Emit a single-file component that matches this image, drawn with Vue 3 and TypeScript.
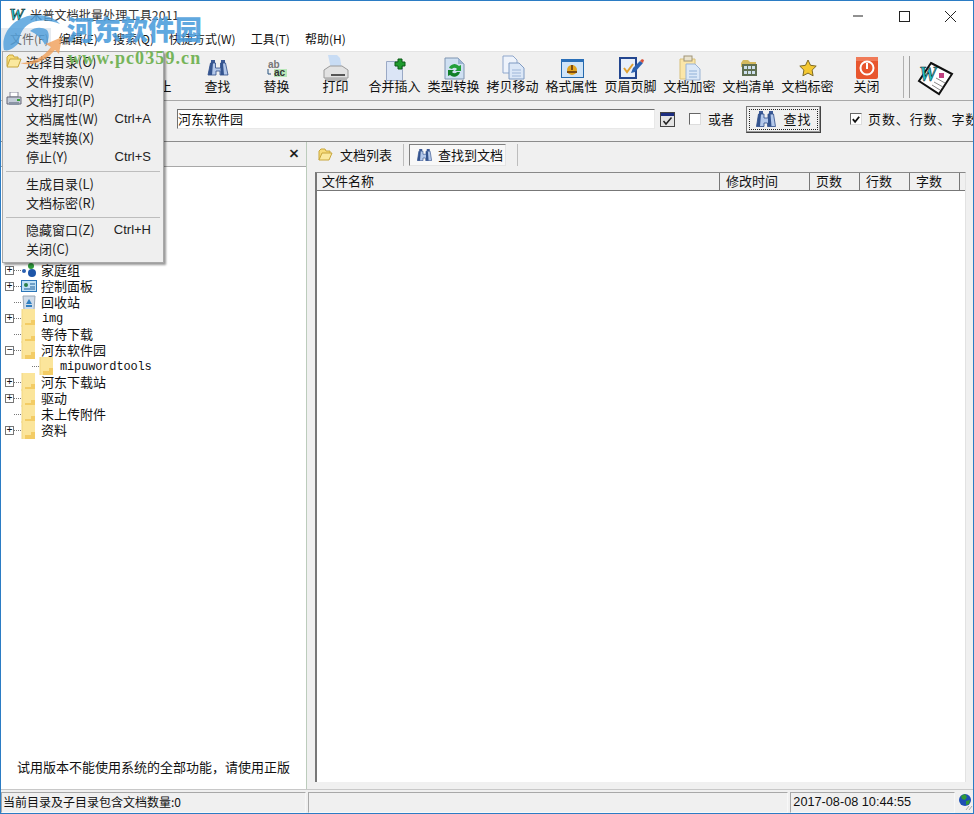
<script setup lang="ts">
type Tool = { label: string; icon: string }
type Row = { label: string; kind: string; exp?: '+' | '-'; depth?: number; mono?: boolean }
type MenuEntry = { label?: string; key?: string; icon?: string; sep?: boolean }

const tools: Tool[] = [
  { label: '选择目录', icon: 'none' },
  { label: '搜索', icon: 'none' },
  { label: '停止', icon: 'stop' },
  { label: '查找', icon: 'find' },
  { label: '替换', icon: 'replace' },
  { label: '打印', icon: 'print' },
  { label: '合并插入', icon: 'merge' },
  { label: '类型转换', icon: 'convert' },
  { label: '拷贝移动', icon: 'copy' },
  { label: '格式属性', icon: 'format' },
  { label: '页眉页脚', icon: 'header' },
  { label: '文档加密', icon: 'lock' },
  { label: '文档清单', icon: 'list' },
  { label: '文档标密', icon: 'star' },
  { label: '关闭', icon: 'close' },
]

const menus = ['文件(F)', '编辑(E)', '搜索(Q)', '快捷方式(W)', '工具(T)', '帮助(H)']

const fileMenu: MenuEntry[] = [
  { label: '选择目录(O)', icon: 'folder' },
  { label: '文件搜索(V)' },
  { label: '文档打印(P)', icon: 'print' },
  { label: '文档属性(W)', key: 'Ctrl+A' },
  { label: '类型转换(X)' },
  { label: '停止(Y)', key: 'Ctrl+S' },
  { sep: true },
  { label: '生成目录(L)' },
  { label: '文档标密(R)' },
  { sep: true },
  { label: '隐藏窗口(Z)', key: 'Ctrl+H' },
  { label: '关闭(C)' },
]

const tree: Row[] = [
  { label: '家庭组', kind: 'home', exp: '+' },
  { label: '控制面板', kind: 'panel', exp: '+' },
  { label: '回收站', kind: 'bin' },
  { label: 'img', kind: 'folder', exp: '+', mono: true },
  { label: '等待下载', kind: 'folder' },
  { label: '河东软件园', kind: 'folder', exp: '-' },
  { label: 'mipuwordtools', kind: 'folder', depth: 1, mono: true },
  { label: '河东下载站', kind: 'folder', exp: '+' },
  { label: '驱动', kind: 'folder', exp: '+' },
  { label: '未上传附件', kind: 'folder' },
  { label: '资料', kind: 'folder', exp: '+' },
]

const columns = ['文件名称', '修改时间', '页数', '行数', '字数', '']
</script>

<template>
  <div class="win">
    <header class="titlebar">
      <span class="app-w">W</span>
      <span class="title">米普文档批量处理工具2011</span>
      <div class="caption">
        <svg width="46" height="28" viewBox="0 0 46 28"><path d="M18 15h10" stroke="#222" fill="none" /></svg>
        <svg width="46" height="28" viewBox="0 0 46 28"><rect x="18.5" y="10.5" width="10" height="10" stroke="#222" fill="none" /></svg>
        <svg width="46" height="28" viewBox="0 0 46 28"><path d="M18 10l11 11M29 10L18 21" stroke="#222" fill="none" /></svg>
      </div>
    </header>

    <nav class="menubar">
      <span v-for="m in menus" :key="m" class="menubar-item">{{ m }}</span>
    </nav>

    <div class="toolbar">
      <div v-for="t in tools" :key="t.label" class="tool">
        <svg class="tool-icon" width="32" height="26" viewBox="0 0 32 26">
          <g v-if="t.icon === 'stop'">
            <rect x="2" y="6" width="18" height="18" fill="#5f86c0" />
          </g>
          <g v-else-if="t.icon === 'find'">
            <path d="M9 4h4v3H9zM19 4h4v3h-4z" fill="#3c5a96" />
            <path d="M8.5 7h5v5h5V7h5l2.5 12h-8v-4h-4v4H6z" fill="#b4c8ea" stroke="#2c4a86" stroke-width=".8" />
            <path d="M8.5 7H11l-1 12H6zM18.500 7H21l1 12h-3.500z" fill="#34548f" />
          </g>
          <g v-else-if="t.icon === 'replace'">
            <text x="7" y="12" class="glyph" fill="#777">ab</text>
            <path d="M7 13v5h3" stroke="#26527f" fill="none" />
            <rect x="13" y="13" width="13" height="8" fill="#b7e6b7" />
            <text x="13" y="20" class="glyph" fill="#333">ac</text>
          </g>
          <g v-else-if="t.icon === 'print'">
            <path d="M8 -1h9l3 3 2 11H11z" fill="#c8dcf4" />
            <path d="M4 14l6-4h12l6 4v8H4z" fill="#e2e2e2" stroke="#9a9a9a" />
            <rect x="11" y="18" width="14" height="2" fill="#555" />
            <path d="M5 22h22v3H5z" fill="#b4b4b4" />
          </g>
          <g v-else-if="t.icon === 'merge'">
            <path d="M7.500 5.500h14l2 2v17h-16z" fill="#dbe5f6" stroke="#9aa9c5" />
            <path d="M19 3h4v3h3v4h-3v3h-4v-3h-3V6h3z" fill="#1e9a2e" stroke="#0a5a16" />
          </g>
          <g v-else-if="t.icon === 'convert'">
            <path d="M7 2h13l6 6v15H7z" fill="#cfe0f2" stroke="#7f94b0" />
            <path d="M20 2v6h6z" fill="#9cb4d2" />
            <path d="M11 12a6 6 0 0 1 10-2l2-1v6h-6l2-2a3 3 0 0 0-5 0z" fill="#22a03a" />
            <path d="M22 16a6 6 0 0 1-10 3l-2 1v-6h6l-2 2a3 3 0 0 0 5 0z" fill="#128028" />
          </g>
          <g v-else-if="t.icon === 'copy'">
            <path d="M6 0h10l4 4v13H6z" fill="#eef3fb" stroke="#8fa7cc" />
            <path d="M12 7h10l5 5v11H12z" fill="#dbe7f7" stroke="#7f9ac2" />
            <path d="M15 14h9M15 17h9M15 20h9" stroke="#9db5d8" fill="none" />
          </g>
          <g v-else-if="t.icon === 'format'">
            <rect x="5.500" y="3.500" width="22" height="18" fill="#cfe4f8" stroke="#2368ac" />
            <rect x="5" y="3" width="23" height="3" fill="#2a6fb8" />
            <circle cx="16" cy="14" r="5" fill="#e3a51f" />
            <path d="M15 9h2v5h-2zM11 15h10v2H11z" fill="#7b4b10" />
          </g>
          <g v-else-if="t.icon === 'header'">
            <path d="M5 2h16v20H5z" fill="#e7effa" stroke="#23468f" stroke-width="2" />
            <path d="M9 12l3 4 6-8" stroke="#e0a030" stroke-width="2" fill="none" />
            <path d="M18 12l7-7 3 2-8 9-4 1z" fill="#2b61b0" />
            <path d="M25 5l3 2 1-3-2-1z" fill="#d8503a" />
          </g>
          <g v-else-if="t.icon === 'lock'">
            <path d="M6 3h15v20H6z" fill="#fbe6a8" stroke="#d8c07a" />
            <rect x="10" y="0" width="8" height="5" fill="#e9e3cf" stroke="#9f9476" />
            <path d="M12 8h9l5 5v11H12z" fill="#dbe8f8" stroke="#9ab3d4" />
            <path d="M15 15h8M15 18h8M15 21h8" stroke="#8fb0d8" fill="none" />
          </g>
          <g v-else-if="t.icon === 'list'">
            <path d="M8 7l2-3h5l2 2h6v5H8z" fill="#d4b95f" />
            <rect x="9" y="8" width="15" height="12" fill="#5f6f52" />
            <path d="M11 10h3v3h-3zM15 10h3v3h-3zM19 10h3v3h-3zM11 15h3v3h-3zM15 15h3v3h-3zM19 15h3v3h-3z" fill="#cfe0ee" />
          </g>
          <g v-else-if="t.icon === 'star'">
            <path d="M16 4l2.500 5.300 5.700.8-4.100 4 1 5.700-5.100-2.700-5.100 2.700 1-5.700-4.100-4 5.700-.8z" fill="#f4c832" stroke="#7d6a25" />
          </g>
          <g v-else-if="t.icon === 'close'">
            <rect x="5" y="1" width="22" height="22" rx="2" fill="#e8562e" />
            <rect x="5" y="1" width="22" height="4" fill="#f07a58" />
            <circle cx="16" cy="12" r="6.500" fill="none" stroke="#fff" stroke-width="2" />
            <rect x="15" y="7" width="2" height="6" fill="#fff" />
          </g>
        </svg>
        <span v-if="t.icon !== 'none'" class="tool-label">{{ t.label }}</span>
      </div>
      <div class="tool-seps"></div>
      <svg class="doc-logo" width="38" height="36" viewBox="0 0 38 36">
        <path d="M14 2l21 11-13 20L2 20z" fill="#fff" stroke="#111" stroke-width="2" />
        <path d="M19 17l9 5M17 21l9 5M15 24l8 5" stroke="#888" fill="none" />
        <rect x="22" y="12" width="5" height="5" fill="#c04080" />
        <text x="2" y="20" class="doc-w">W</text>
      </svg>
    </div>

    <div class="searchbar">
      <div class="search-input">河东软件园</div>
      <svg class="combo" width="15" height="15" viewBox="0 0 15 15">
        <rect x=".5" y=".5" width="14" height="14" fill="#e4e4e4" stroke="#444" />
        <rect x="1" y="1" width="13" height="3" fill="#1c2d80" />
        <path d="M3.500 9l2.500 3 5.500-6.500" stroke="#222" stroke-width="1.500" fill="none" />
      </svg>
      <span class="check"></span>
      <span class="check-label">或者</span>
      <button type="button" class="find-btn">
        <span class="find-focus">
          <svg width="20" height="16" viewBox="0 0 20 16">
            <path d="M3 0h4v3H3zM13 0h4v3h-4z" fill="#3c5a96" />
            <path d="M2.500 3h5.500v4h4V3h5.500l2 12.500h-8V12H8v3.500H.5z" fill="#b4c8ea" stroke="#2c4a86" stroke-width=".8" />
            <path d="M2.500 3H5L4 15.500H.5zM12 3h2.500l1 12.500H12z" fill="#34548f" />
          </svg>
          <span>查找</span>
        </span>
      </button>
      <span class="check checked">
        <svg width="11" height="11" viewBox="0 0 11 11"><path d="M2 5l2.500 3L9 2.500" stroke="#111" stroke-width="2" fill="none" /></svg>
      </span>
      <span class="check-label stats">页数、行数、字数</span>
    </div>

    <main class="main">
      <aside class="left">
        <div class="left-head"><span class="left-close">×</span></div>
        <ul class="tree">
          <li v-for="r in tree" :key="r.label" class="row" :class="{ child: r.depth }">
            <span v-if="r.exp" class="expander">{{ r.exp === '+' ? '+' : '−' }}</span>
            <span v-else class="expander blank"></span>
            <span class="dots"></span>
            <svg class="row-icon" width="16" height="18" viewBox="0 0 16 18">
              <g v-if="r.kind === 'folder'">
                <path d="M1 0h13v18H1z" fill="#fbe59b" />
                <path d="M10 11h4v7H4v-4h6z" fill="#f3cc65" />
                <path d="M1 0v18" stroke="#f1d680" />
              </g>
              <g v-else-if="r.kind === 'home'">
                <circle cx="3" cy="10" r="2" fill="#2a5fb0" />
                <circle cx="10" cy="5" r="3" fill="#2e9a3c" />
                <circle cx="11" cy="12" r="4" fill="#1d55a8" />
              </g>
              <g v-else-if="r.kind === 'panel'">
                <rect x=".5" y="3.500" width="15" height="11" fill="#bfe0f5" stroke="#2a75b8" />
                <circle cx="5" cy="8" r="2" fill="#2b7f4a" />
                <path d="M9 7h5M9 10h5M3 12h11" stroke="#1f5e9b" fill="none" />
              </g>
              <g v-else>
                <path d="M2 3h12l-1 14H3z" fill="#cfdbe8" stroke="#9aa8b5" />
                <path d="M8 6l3 5H5z" fill="#2f7fc0" />
                <path d="M5 12h6v2H5z" fill="#2f7fc0" />
              </g>
            </svg>
            <span class="row-label" :class="{ mono: r.mono }">{{ r.label }}</span>
          </li>
        </ul>
        <p class="trial">试用版本不能使用系统的全部功能，请使用正版</p>
      </aside>

      <section class="right">
        <div class="tabs">
          <span class="tab">
            <svg width="15" height="13" viewBox="0 0 15 13">
              <path d="M1 12V3l2-2h4l1 2h4v2" fill="#f8dc7a" stroke="#c8a63c" />
              <path d="M1 12l3-7h10l-3 7z" fill="#fbe99f" stroke="#c8a63c" />
            </svg>
            文档列表
          </span>
          <span class="tab-sep"></span>
          <span class="tab pressed">
            <svg width="15" height="12" viewBox="0 0 20 16">
              <path d="M3 0h4v3H3zM13 0h4v3h-4z" fill="#3c5a96" />
              <path d="M2.500 3h5.500v4h4V3h5.500l2 12.500h-8V12H8v3.500H.5z" fill="#b4c8ea" stroke="#2c4a86" stroke-width=".8" />
              <path d="M2.500 3H5L4 15.500H.5zM12 3h2.500l1 12.500H12z" fill="#34548f" />
            </svg>
            查找到文档
          </span>
          <span class="tab-sep"></span>
        </div>
        <div class="list">
          <div class="list-head">
            <span v-for="(c, i) in columns" :key="i" class="col">{{ c }}</span>
          </div>
          <div class="list-body"></div>
        </div>
      </section>
    </main>

    <footer class="status">
      <span class="cell first">当前目录及子目录包含文档数量:0</span>
      <span class="cell middle"></span>
      <span class="cell time">2017-08-08 10:44:55</span>
      <span class="grip">
        <svg width="16" height="18" viewBox="0 0 16 18">
          <circle cx="8" cy="8" r="6" fill="#1d4fb5" />
          <path d="M4 4l4-2 2 3-2 3-3-1zM9 9l4-1-1 4-3 1z" fill="#2f9a35" />
          <path d="M15 14l-3 4M12 14l-3 4" stroke="#aaa" fill="none" />
        </svg>
      </span>
    </footer>

    <!-- popup menu -->
    <div class="popup">
      <template v-for="(e, i) in fileMenu" :key="i">
        <div v-if="e.sep" class="popup-sep"></div>
        <div v-else class="popup-item">
          <svg v-if="e.icon === 'folder'" class="popup-icon" width="16" height="14" viewBox="0 0 16 14">
            <path d="M1 12V3l2-2h4l1 2h4v2" fill="#f8dc7a" stroke="#c8a63c" />
            <path d="M1 13l3-8h11l-3 8z" fill="#fbe99f" stroke="#c8a63c" />
          </svg>
          <svg v-if="e.icon === 'print'" class="popup-icon" width="16" height="14" viewBox="0 0 16 14">
            <path d="M4 0h8v5H4z" fill="#fff" stroke="#889" />
            <path d="M1 5h14v7H1z" fill="#c4ccd8" stroke="#667" />
            <rect x="3" y="10" width="10" height="3" fill="#8a94a4" />
            <rect x="11" y="7" width="3" height="2" fill="#3aa03a" />
          </svg>
          <span class="popup-label">{{ e.label }}</span>
          <span v-if="e.key" class="popup-key">{{ e.key }}</span>
        </div>
      </template>
    </div>

    <!-- site watermark stamped over the capture -->
    <div class="stamp">
      <svg class="stamp-logo" width="62" height="56" viewBox="0 0 62 56">
        <path d="M2 36C-2 18 14 1 35 1c9 0 18 3 23 9-10-4-22-5-31 0-7 4-10 12-10 19-4 4-10 9-15 7z" fill="#4f9fdc" />
        <path d="M28 17c5-4 12-4 17-1 3 4 2 11-2 15-3-6-8-11-15-14z" fill="#4f9fdc" />
        <path d="M18 49C30 49 42 43 49 33l-5-3 16-7-3 17-4-4C44 47 30 53 18 49z" fill="#f0a15c" />
      </svg>
      <span class="stamp-name">河东软件园</span>
      <span class="stamp-url">www.pc0359.cn</span>
    </div>
  </div>
</template>

<style scoped>
.win {
  position: relative;
  box-sizing: border-box;
  width: 974px;
  height: 814px;
  display: flex;
  flex-direction: column;
  overflow: hidden;
  background: #f0f0f0;
  border: 1px solid #2b7cc4;
  color: #111;
  font: 13px/16px "Noto Sans CJK SC", "Liberation Sans", sans-serif;
}
.titlebar {
  height: 27px;
  flex: none;
  display: flex;
  align-items: center;
  padding-left: 8px;
  background: #fff;
}
.app-w {
  width: 21px;
  font: italic bold 17px/20px "Liberation Serif", serif;
  color: #1fc0c8;
  -webkit-text-stroke: .5px #111;
}
.title { font-size: 12.2px; color: #333; }
.caption { margin-left: auto; display: flex; }
.caption svg { display: block; }
.menubar {
  height: 22px;
  flex: none;
  display: flex;
  align-items: center;
  gap: 15px;
  padding: 0 0 1px 9px;
  background: linear-gradient(90deg, #e6ebf0 0, #e6ebf0 50px, #fff 50px);
  font-size: 12px;
}
.menubar-item:first-child { margin-right: -5px; color: #666; }
.toolbar {
  box-sizing: border-box;
  height: 50px;
  flex: none;
  display: flex;
  padding-left: 10px;
  border-top: 1px solid #e4e4e4;
  border-bottom: 1px solid #a8a8a8;
}
.tool {
  width: 59px;
  flex: none;
  display: flex;
  flex-direction: column;
  align-items: center;
}
.tool-icon { display: block; margin-top: 4px; flex: none; overflow: visible; }
.tool-label { font-size: 13px; line-height: 16px; margin-top: -4px; white-space: nowrap; }
.tool-seps {
  width: 5px;
  margin-left: 7px;
  border-left: 1px solid #b0b0b0;
  border-right: 1px solid #a0a0a0;
  margin-top: 4px;
  margin-bottom: 2px;
  flex: none;
}
.doc-logo { margin: 9px 0 0 7px; flex: none; }
.doc-w {
  font: italic bold 20px "Liberation Serif", serif;
  fill: #1fc0c8;
  stroke: #111;
  stroke-width: .5;
}
.glyph { font: bold 10px "Liberation Sans", sans-serif; }
.searchbar {
  box-sizing: border-box;
  height: 41px;
  flex: none;
  display: flex;
  align-items: center;
  padding: 0 0 4px 176px;
  border-bottom: 1px solid #8c8c8c;
  white-space: nowrap;
  overflow: hidden;
}
.search-input {
  box-sizing: border-box;
  width: 478px;
  height: 20px;
  flex: none;
  padding-left: 0;
  background: #fff;
  border-top: 1px solid #707070;
  border-left: 1px solid #707070;
  border-bottom: 1px solid #e8e8e8;
  border-right: 1px solid #e8e8e8;
  line-height: 17px;
}
.combo { margin-left: 5px; flex: none; }
.check {
  box-sizing: border-box;
  width: 12px;
  height: 12px;
  margin-left: 14px;
  flex: none;
  background: #fff;
  border-top: 1px solid #666;
  border-left: 1px solid #666;
  border-right: 1px solid #ddd;
  border-bottom: 1px solid #ddd;
}
.check.checked { margin-left: 29px; display: flex; }
.check-label { margin-left: 7px; flex: none; }
.stats { margin-left: 6px; letter-spacing: .9px; }
.find-btn {
  box-sizing: border-box;
  width: 75px;
  height: 27px;
  margin-left: 12px;
  padding: 2px;
  flex: none;
  background: #f0f0f0;
  border: 1px solid;
  border-color: #777 #444 #444 #777;
  box-shadow: inset -1px -1px 0 #999;
  font: inherit;
  color: inherit;
}
.find-focus {
  box-sizing: border-box;
  height: 100%;
  display: flex;
  align-items: center;
  justify-content: center;
  gap: 8px;
  border: 1px dotted #222;
  letter-spacing: 1px;
}
.main { flex: 1; min-height: 0; display: flex; }
.left {
  width: 305px;
  flex: none;
  display: flex;
  flex-direction: column;
  background: #fff;
  border-right: 1px solid #bcccbc;
}
.left-head {
  height: 24px;
  flex: none;
  display: flex;
  justify-content: flex-end;
  align-items: center;
  padding-right: 7px;
  background: #f0f0f0;
  border-bottom: 1px solid #a8a8a8;
}
.left-close { font: 17px/20px "Liberation Sans", sans-serif; -webkit-text-stroke: .4px #111; }
.tree { margin: 0; padding: 95px 0 0; list-style: none; }
.row { display: flex; align-items: center; height: 16px; padding-left: 4px; }
.row.child { padding-left: 22px; }
.expander {
  box-sizing: border-box;
  width: 9px;
  height: 9px;
  flex: none;
  display: flex;
  align-items: center;
  justify-content: center;
  border: 1px solid #777;
  font: 10px/7px "Liberation Mono", monospace;
}
.expander.blank { border-color: transparent; }
.dots { width: 7px; flex: none; border-top: 1px dotted #777; }
.row-icon { flex: none; display: block; margin-right: 4px; overflow: visible; }
.row-label.mono { font: 12px/16px "Liberation Mono", monospace; letter-spacing: -.15px; padding: 2px 0 0 1px; }
.trial { margin: auto 0 14px 16px; line-height: 16px; }
.right { flex: 1; min-width: 0; display: flex; flex-direction: column; padding: 1px 7px 7px 8px; }
.tabs { height: 23px; flex: none; display: flex; align-items: center; margin-left: 3px; }
.tab { display: flex; align-items: center; gap: 7px; height: 22px; box-sizing: border-box; }
.tab.pressed {
  gap: 6px;
  padding: 0 2px 0 7px;
  border: 1px solid;
  border-color: #808080 #e4e4e4 #e4e4e4 #808080;
  background: #f8f8f8;
}
.tab-sep { width: 1px; height: 22px; margin: 0 5px 0 11px; background: #bdbdbd; }
.list {
  flex: 1;
  min-height: 0;
  margin-top: 6px;
  display: flex;
  flex-direction: column;
  border-top: 1px solid #888;
  border-left: 2px solid #777;
  border-right: 1px solid #e2e2e2;
}
.list-head {
  height: 17px;
  flex: none;
  display: grid;
  grid-template-columns: 403px 90px 50px 50px 50px 1fr;
  border-bottom: 1px solid #777;
}
.col {
  padding-left: 5px;
  font-size: 13px;
  line-height: 16px;
  border-right: 1px solid #777;
  white-space: nowrap;
}
.col:nth-child(n+2) { padding-left: 6px; }
.col:last-child { border-right: none; }
.list-body { flex: 1; background: #fff; }
.status {
  height: 24px;
  flex: none;
  display: flex;
  gap: 2px;
  padding-top: 2px;
  box-sizing: border-box;
  border-top: 1px solid #c8c8c8;
  font-size: 12px;
}
.cell {
  box-sizing: border-box;
  border: 1px solid;
  border-color: #a8a8a8 #f8f8f8 #f8f8f8 #a8a8a8;
  line-height: 18px;
  white-space: nowrap;
}
.first { width: 306px; padding-left: 1px; }
.middle { width: 481px; }
.time { width: 165px; padding-left: 2px; font: 12.7px/18px "Liberation Sans", sans-serif; }
.grip { flex: 1; display: flex; justify-content: flex-end; }
.popup {
  position: absolute;
  left: 1px;
  top: 50px;
  box-sizing: border-box;
  width: 162px;
  height: 212px;
  padding-top: 0;
  background: #efefef;
  border: 1px solid #a8a8a8;
  box-shadow: 2px 2px 2px rgba(0, 0, 0, .4);
}
.popup-item {
  position: relative;
  height: 19px;
  display: flex;
  align-items: center;
  padding: 0 12px 0 23px;
  color: #222;
}
.popup-icon { position: absolute; left: 3px; top: 2px; }
.popup-key { margin-left: auto; font: 13px "Liberation Sans", sans-serif; }
.popup-sep { height: 8px; box-sizing: border-box; position: relative; }
.popup-sep::after {
  content: "";
  position: absolute;
  left: 3px;
  right: 3px;
  top: 5px;
  border-top: 1px solid #bdbdbd;
}
.stamp {
  position: absolute;
  left: 1px;
  top: 11px;
  width: 200px;
  height: 56px;
  pointer-events: none;
}
.stamp-logo { position: absolute; left: 0; top: 2px; opacity: .82; overflow: visible; }
.stamp-name {
  position: absolute;
  left: 65px;
  top: 0;
  color: #4f9fdc;
  opacity: .9;
  font: 900 27px/34px "Noto Sans CJK SC", sans-serif;
  white-space: nowrap;
}
.stamp-url {
  position: absolute;
  left: 66px;
  top: 36px;
  color: #76b45a;
  font: bold 18px/20px "Liberation Serif", serif;
  letter-spacing: 1.1px;
  white-space: nowrap;
}
</style>

<style>
html, body { margin: 0; background: #f0f0f0; }
</style>
